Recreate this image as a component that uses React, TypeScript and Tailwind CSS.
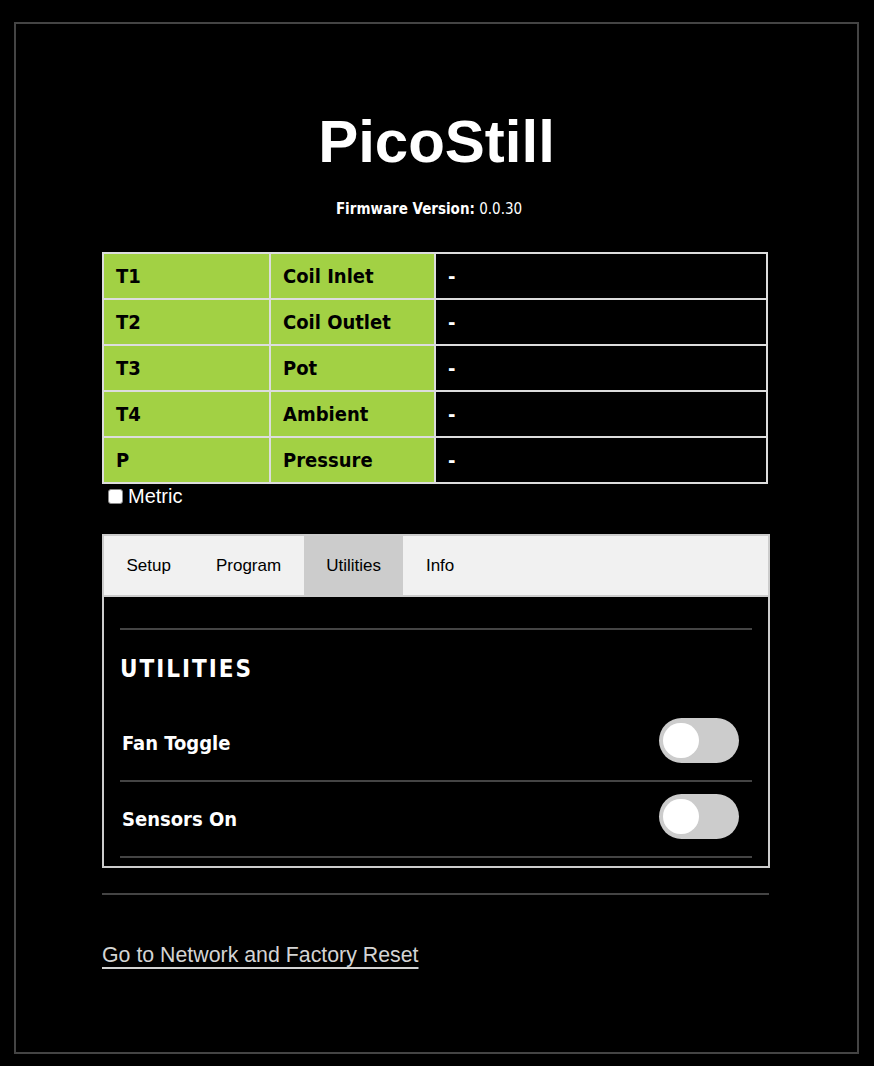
import React from "react";

const tahoma = { fontFamily: '"DejaVu Sans Condensed", "DejaVu Sans", sans-serif' };
const arial = { fontFamily: '"Liberation Sans", Arial, sans-serif' };

const rows = [
  ["T1", "Coil Inlet", "-"],
  ["T2", "Coil Outlet", "-"],
  ["T3", "Pot", "-"],
  ["T4", "Ambient", "-"],
  ["P", "Pressure", "-"],
];

function Toggle() {
  return (
    <div className="relative w-[80px] h-[45px] mb-[5px] rounded-full bg-[#cccccc] shrink-0">
      <div className="absolute left-[4px] top-[5px] w-[36px] h-[35px] rounded-full bg-white" />
    </div>
  );
}

export default function App() {
  return (
    <div className="min-h-[1066px] bg-black pt-[22px] pl-[14px]">
      <div className="w-[845px] h-[1032px] border-2 border-[#444444] flex flex-col">
        <h1 className="mt-[88px] h-[60px] leading-[60px] text-[60px] font-bold text-white text-center" style={arial}>
          PicoStill
        </h1>
        <div className="mt-[29px] pr-[15px] text-[15px] leading-[17px] text-white text-center" style={tahoma}>
          <b>Firmware Version:</b> 0.0.30
        </div>
        <div className="ml-[86px] w-[668px] flex flex-col">
          <div className="mt-[34px] w-[666px] grid grid-cols-[165px_163px_330px] gap-[2px] p-[2px] bg-[#dddddd]">
            {rows.map((r) => (
              <React.Fragment key={r[0]}>
                <div className="h-[44px] flex items-center px-[12px] bg-[#a2d144] text-black text-[20px] font-bold" style={tahoma}>
                  {r[0]}
                </div>
                <div className="h-[44px] flex items-center px-[12px] bg-[#a2d144] text-black text-[20px] font-bold" style={tahoma}>
                  {r[1]}
                </div>
                <div className="h-[44px] flex items-center px-[12px] bg-black text-white text-[20px] font-bold" style={tahoma}>
                  {r[2]}
                </div>
              </React.Fragment>
            ))}
          </div>
          <div className="w-[666px] flex items-center h-[23px] mt-[1px]">
            <span className="ml-[6px] w-[15px] h-[15px] rounded-[3px] bg-white border border-[#888]" />
            <span className="ml-[5px] text-[20px] leading-[23px] text-white" style={arial}>
              Metric
            </span>
          </div>
          <div className="mt-[26px] w-[668px] border-2 border-[#cccccc] bg-black">
            <div className="h-[61px] flex bg-[#f1f1f1] border-b-2 border-[#cccccc] text-[17px] text-black" style={arial}>
              <div className="px-[22.5px] flex items-center">Setup</div>
              <div className="px-[22.5px] flex items-center">Program</div>
              <div className="px-[22.5px] flex items-center bg-[#cccccc]">Utilities</div>
              <div className="px-[22.5px] flex items-center">Info</div>
            </div>
            <div className="px-[16px] pt-[31px] pb-[8px]">
              <div className="border-t-2 border-[#444444]" />
              <h3 className="mt-[27px] text-[24px] leading-[24px] font-bold tracking-[2px] text-white" style={tahoma}>
                UTILITIES
              </h3>
              <div className="mt-[25px]">
                <div className="h-[76px] flex items-center justify-between pl-[2px] pr-[13px] border-b-2 border-[#444444]">
                  <span className="text-[20px] font-bold text-white" style={tahoma}>Fan Toggle</span>
                  <Toggle />
                </div>
                <div className="h-[76px] flex items-center justify-between pl-[2px] pr-[13px] border-b-2 border-[#444444]">
                  <span className="text-[20px] font-bold text-white" style={tahoma}>Sensors On</span>
                  <Toggle />
                </div>
              </div>
            </div>
          </div>
          <div className="mt-[25px] w-[667px] border-t-2 border-[#444444]" />
          <div className="mt-[48px]">
            <a
              href="#"
              className="text-[21.33px] leading-[24.5px] text-[#d4d4d4] underline decoration-2 underline-offset-[5px]"
              style={arial}
            >
              Go to Network and Factory Reset
            </a>
          </div>
        </div>
      </div>
    </div>
  );
}
